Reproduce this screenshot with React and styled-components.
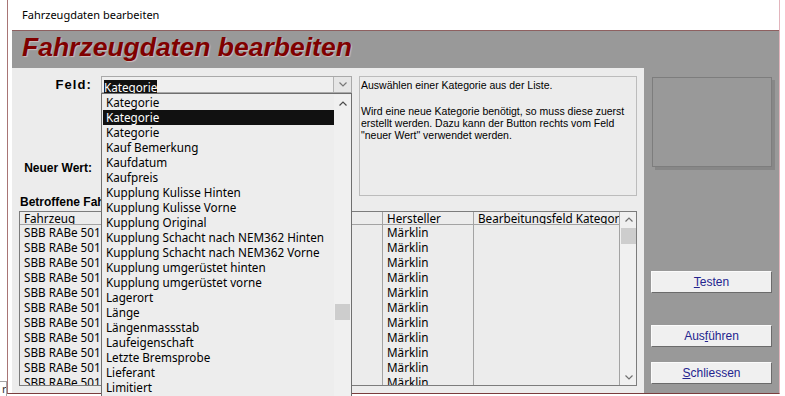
import styled, { createGlobalStyle } from 'styled-components';

const GlobalStyle = createGlobalStyle`
  html, body {
    margin: 0;
    padding: 0;
    background: #ffffff;
    overflow: hidden;
  }
  body {
    font-family: 'Liberation Sans', Arial, sans-serif;
  }
`;

const fields = [
  'Kategorie',
  'Kategorie',
  'Kategorie',
  'Kauf Bemerkung',
  'Kaufdatum',
  'Kaufpreis',
  'Kupplung Kulisse Hinten',
  'Kupplung Kulisse Vorne',
  'Kupplung Original',
  'Kupplung Schacht nach NEM362 Hinten',
  'Kupplung Schacht nach NEM362 Vorne',
  'Kupplung umgerüstet hinten',
  'Kupplung umgerüstet vorne',
  'Lagerort',
  'Länge',
  'Längenmassstab',
  'Laufeigenschaft',
  'Letzte Bremsprobe',
  'Lieferant',
  'Limitiert',
];

const vehicles = Array.from({ length: 11 }, () => ({
  name: 'SBB RABe 501 Giruno',
  maker: 'Märklin',
}));

const Page = styled.div`
  display: flex;
  width: 785px;
  height: 396px;
  overflow: hidden;
`;

const Backdrop = styled.div`
  width: 7px;
  display: flex;
  flex-direction: column;
  justify-content: flex-end;
`;

const BehindTab = styled.div`
  height: 15px;
  box-sizing: border-box;
  border-top: 1px solid #a3a3a3;
  border-right: 1px solid #a3a3a3;
  overflow: hidden;
  padding-left: 2px;
  font: 11px 'Noto Sans', sans-serif;
  line-height: 14px;
  color: #333;
`;

const Window = styled.div`
  width: 773px;
  height: 394px;
  box-sizing: border-box;
  border-left: 1px solid #a87575;
  border-right: 1px solid #e3b5bd;
  border-bottom: 1px solid #7b3d3d;
  display: flex;
  flex-direction: column;
`;

const TitleBar = styled.div`
  height: 30px;
  flex: none;
  padding-left: 14px;
  font: 11px 'Noto Sans', sans-serif;
  line-height: 30px;
  color: #000;
`;

const FormArea = styled.div`
  flex: 1;
  min-height: 0;
  margin-left: 4px;
  border-top: 1px solid #8e6060;
  display: flex;
  flex-direction: column;
`;

const Header = styled.div`
  height: 37px;
  flex: none;
  background: #999999;
  padding-left: 10px;
`;

const Title = styled.h1`
  margin: 0;
  font: italic bold 26.5px 'Liberation Sans', Arial, sans-serif;
  line-height: 33px;
  color: #800000;
  text-shadow: 1px 1px 1px #cdbdbd;
`;

const Body = styled.div`
  flex: 1;
  min-height: 0;
  display: flex;
`;

const Detail = styled.div`
  width: 632px;
  flex: none;
  background: #ececec;
  padding-top: 8px;
  box-sizing: border-box;
`;

const TopRow = styled.div`
  display: flex;
  height: 120px;
`;

const Fields = styled.div`
  width: 340px;
  display: flex;
  flex-direction: column;
`;

const FieldRow = styled.div`
  display: grid;
  grid-template-columns: 80px 251px;
  column-gap: 9px;
  align-items: center;
  height: 17px;
  margin-top: ${(p) => p.$top || 0}px;
`;

const Label = styled.div`
  text-align: right;
  font: bold ${(p) => (p.$large ? '13px' : '12px')} 'Liberation Sans', Arial, sans-serif;
  letter-spacing: ${(p) => (p.$large ? '1.1px' : '0')};
  color: #000;
  white-space: nowrap;
`;

const Combo = styled.div`
  position: relative;
  height: 17px;
  box-sizing: border-box;
  border: 1px solid #a9a9a9;
  background: #efefef;
  display: flex;
`;

const ComboValue = styled.div`
  flex: 1;
  padding: 1px 0 0 2px;
`;

const Selected = styled.span`
  display: inline-block;
  height: 14px;
  background: #111111;
  color: #ffffff;
  font: 11.7px 'Noto Sans', sans-serif;
  line-height: 14px;
`;

const DropButton = styled.div`
  width: 18px;
  box-sizing: border-box;
  border-left: 1px solid #b3b3b3;
  background: #e6e6e6;
  display: flex;
  align-items: center;
  justify-content: center;
`;

const DropList = styled.div`
  position: absolute;
  top: 16px;
  left: -1px;
  width: 251px;
  height: 310px;
  box-sizing: border-box;
  border: 1px solid #6f6f6f;
  background: #ededed;
  display: flex;
  padding: 1px 0 0 1px;
  z-index: 10;
`;

const Items = styled.div`
  width: 231px;
  display: flex;
  flex-direction: column;
`;

const Item = styled.div`
  height: 15px;
  padding-left: 3px;
  font: 11.7px 'Noto Sans', sans-serif;
  line-height: 15px;
  white-space: nowrap;
  background: ${(p) => (p.$active ? '#111111' : 'transparent')};
  color: ${(p) => (p.$active ? '#ffffff' : '#000000')};
`;

const ScrollTrack = styled.div`
  width: 17px;
  flex: none;
  background: #f0f0f0;
  display: flex;
  flex-direction: column;
  align-items: center;
`;

const Arrow = styled.div`
  height: ${(p) => p.$h || 15}px;
  width: 100%;
  display: flex;
  align-items: center;
  justify-content: center;
  flex: none;
  margin-top: ${(p) => (p.$bottom ? 'auto' : '0')};
`;

const Thumb = styled.div`
  width: 15px;
  height: 16px;
  background: #cdcdcd;
  margin-top: ${(p) => p.$top}px;
  flex: none;
`;

const Hint = styled.div`
  width: 278px;
  height: 120px;
  margin-left: 7px;
  box-sizing: border-box;
  border: 1px solid #bcbcbc;
  padding: 2px 2px 0 1px;
  font: 10.5px 'Liberation Sans', Arial, sans-serif;
  line-height: 12px;
  color: #000;

  p {
    margin: 0 0 14px;
  }
`;

const SectionLabel = styled.div`
  padding-left: 8px;
  height: 12px;
  margin-bottom: 3px;
  font: bold 12px 'Liberation Sans', Arial, sans-serif;
  line-height: 12px;
  white-space: nowrap;
  color: #000;
`;

const Datasheet = styled.div`
  margin-left: 7px;
  width: 618px;
  height: 175px;
  box-sizing: border-box;
  border: 1px solid #7c7c7c;
  background: #ececec;
  display: flex;
  overflow: hidden;
`;

const Column = styled.div`
  width: ${(p) => p.$width}px;
  flex: none;
  box-sizing: border-box;
  border-right: 1px solid #a3a3a3;
  display: flex;
  flex-direction: column;
  overflow: hidden;
`;

const HeadCell = styled.div`
  height: 13px;
  flex: none;
  box-sizing: border-box;
  border-bottom: 1px solid #a3a3a3;
  padding-left: 4px;
  font: 11.7px 'Noto Sans', sans-serif;
  line-height: 12px;
  white-space: nowrap;
  overflow: hidden;
  color: #000;
`;

const Cell = styled.div`
  height: 15px;
  flex: none;
  padding-left: 4px;
  font: 11.7px 'Noto Sans', sans-serif;
  line-height: 15px;
  white-space: nowrap;
  overflow: hidden;
  color: #000;
`;

const Side = styled.div`
  flex: 1;
  background: #999999;
  display: flex;
  flex-direction: column;
  padding-left: 7px;
`;

const Frame = styled.div`
  width: 120px;
  height: 90px;
  margin: 9px 0 0 1px;
  box-sizing: border-box;
  border: 1px solid #7d7d7d;
  box-shadow: 3px 3px 0 #878787;
`;

const Button = styled.button`
  width: 121px;
  height: 22px;
  margin-top: ${(p) => p.$gap}px;
  padding: 0;
  box-sizing: border-box;
  background: #f0f0f0;
  border: 1px solid;
  border-color: #fbfbfb #6b6b6b #6b6b6b #fbfbfb;
  font: 12px 'Liberation Sans', Arial, sans-serif;
  color: #24248f;
  text-align: center;
  cursor: pointer;
`;

const Chevron = ({ up, color = '#6a6a6a' }) => (
  <svg width="8" height="5" viewBox="0 0 8 5">
    <polyline
      points={up ? '0.5,4.5 4,1 7.5,4.5' : '0.5,0.5 4,4 7.5,0.5'}
      fill="none"
      stroke={color}
      strokeWidth="1.2"
    />
  </svg>
);

export default function App() {
  return (
    <Page>
      <GlobalStyle />
      <Backdrop>
        <BehindTab>r</BehindTab>
      </Backdrop>
      <Window>
        <TitleBar>Fahrzeugdaten bearbeiten</TitleBar>
        <FormArea>
          <Header>
            <Title>Fahrzeugdaten bearbeiten</Title>
          </Header>
          <Body>
            <Detail>
              <TopRow>
                <Fields>
                  <FieldRow>
                    <Label $large>Feld:</Label>
                    <Combo>
                      <ComboValue>
                        <Selected>Kategorie</Selected>
                      </ComboValue>
                      <DropButton>
                        <Chevron color="#777" />
                      </DropButton>
                      <DropList>
                        <Items>
                          {fields.map((f, i) => (
                            <Item key={i} $active={i === 1}>
                              {f}
                            </Item>
                          ))}
                        </Items>
                        <ScrollTrack>
                          <Arrow $h={17}>
                            <Chevron up color="#4a4a4a" />
                          </Arrow>
                          <Thumb $top={192} />
                        </ScrollTrack>
                      </DropList>
                    </Combo>
                  </FieldRow>
                  <FieldRow $top={66}>
                    <Label>Neuer Wert:</Label>
                  </FieldRow>
                </Fields>
                <Hint>
                  <p>Auswählen einer Kategorie aus der Liste.</p>
                  <p>
                    Wird eine neue Kategorie benötigt, so muss diese zuerst
                    <br />
                    erstellt werden. Dazu kann der Button rechts vom Feld
                    <br />
                    "neuer Wert" verwendet werden.
                  </p>
                </Hint>
              </TopRow>
              <SectionLabel>Betroffene Fahrzeuge</SectionLabel>
              <Datasheet>
                <Column $width={363}>
                  <HeadCell>Fahrzeug</HeadCell>
                  {vehicles.map((v, i) => (
                    <Cell key={i}>{v.name}</Cell>
                  ))}
                </Column>
                <Column $width={91}>
                  <HeadCell>Hersteller</HeadCell>
                  {vehicles.map((v, i) => (
                    <Cell key={i}>{v.maker}</Cell>
                  ))}
                </Column>
                <Column $width={146}>
                  <HeadCell>Bearbeitungsfeld Kategorie</HeadCell>
                </Column>
                <ScrollTrack>
                  <Arrow $h={15}>
                    <Chevron up color="#707070" />
                  </Arrow>
                  <Thumb $top={1} />
                  <Arrow $h={15} $bottom>
                    <Chevron color="#707070" />
                  </Arrow>
                </ScrollTrack>
              </Datasheet>
            </Detail>
            <Side>
              <Frame />
              <Button $gap={104}>
                <u>T</u>esten
              </Button>
              <Button $gap={32}>
                Aus<u>f</u>ühren
              </Button>
              <Button $gap={15}>
                <u>S</u>chliessen
              </Button>
            </Side>
          </Body>
        </FormArea>
      </Window>
    </Page>
  );
}
